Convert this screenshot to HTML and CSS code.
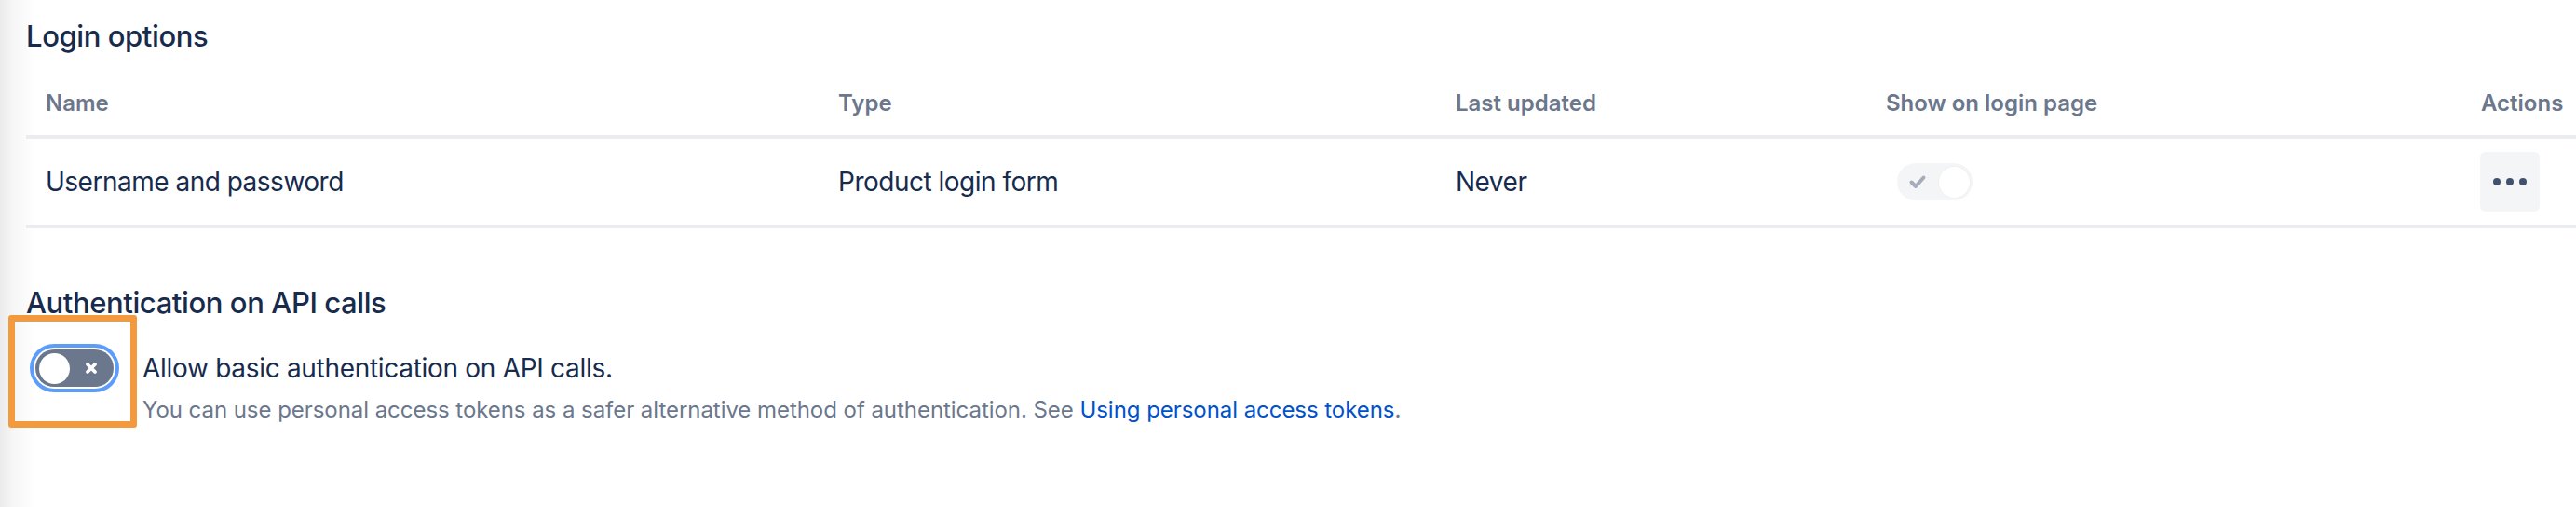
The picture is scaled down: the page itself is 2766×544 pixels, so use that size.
FILE: index.html
```html
<!DOCTYPE html>
<html lang="en">
<head>
<meta charset="utf-8">
<title>Login options</title>
<link rel="stylesheet" href="styles.css">
</head>
<body>
<main class="page">
  <h2 class="heading">Login options</h2>
  <div class="table">
    <div class="th">Name</div>
    <div class="th">Type</div>
    <div class="th">Last updated</div>
    <div class="th">Show on login page</div>
    <div class="th">Actions</div>

    <div class="td">Username and password</div>
    <div class="td">Product login form</div>
    <div class="td">Never</div>
    <div class="td">
      <span class="mini-toggle">
        <svg class="mini-check" viewBox="0 0 20 20" width="20" height="20"><path d="M3.5 10.5 L8 15 L16.5 5.5" fill="none" stroke="#A5ADBA" stroke-width="4" stroke-linecap="round" stroke-linejoin="round"/></svg>
        <span class="mini-knob"></span>
      </span>
    </div>
    <div class="td">
      <button class="more" type="button" aria-label="More actions">
        <span class="dot"></span><span class="dot"></span><span class="dot"></span>
      </button>
    </div>
  </div>

  <h2 class="heading heading-api">Authentication on API calls</h2>
  <div class="field">
    <div class="toggle-wrap">
      <span class="toggle">
        <span class="knob"></span>
        <svg class="x-icon" viewBox="0 0 16 16" width="16" height="16"><path d="M4 4 L12 12 M12 4 L4 12" fill="none" stroke="#fff" stroke-width="3.8" stroke-linecap="round"/></svg>
      </span>
      <span class="highlight"></span>
    </div>
    <div class="field-text">
      <div class="label">Allow basic authentication on API calls.</div>
      <div class="help">You can use personal access tokens as a safer alternative method of authentication. See <a href="#" class="link">Using personal access tokens</a>.</div>
    </div>
  </div>
</main>
</body>
</html>
```

FILE: styles.css
```css
html, body {
  margin: 0;
  padding: 0;
}
body {
  font-family: Inter, "Noto Sans", "Liberation Sans", sans-serif;
  color: #172B4D;
  width: 2766px;
  height: 544px;
  overflow: hidden;
  background: linear-gradient(to right, #ebebeb 0px, #f6f6f6 14px, #ffffff 38px) no-repeat;
  background-size: 40px 100%;
  background-color: #fff;
}
.page {
  padding: 19px 0 0 28px;
}
.heading {
  margin: 0;
  font-size: 31px;
  line-height: 40px;
  font-weight: 500;
  letter-spacing: -0.4px;
  color: #172B4D;
}
.table {
  display: grid;
  grid-template-columns: 851px 663px 462px 639px 1fr;
}
.th {
  font-size: 24px;
  line-height: 32px;
  font-weight: 600;
  color: #6B778C;
  padding: 36px 0 18px 21px;
  border-bottom: 4px solid #EBECF0;
  letter-spacing: 0;
}
.td {
  height: 92px;
  display: flex;
  align-items: center;
  padding-left: 21px;
  font-size: 28px;
  line-height: 32px;
  border-bottom: 4px solid #EBECF0;
  letter-spacing: -0.5px;
}
.mini-toggle {
  display: flex;
  align-items: center;
  justify-content: space-between;
  width: 81px;
  height: 40px;
  box-sizing: border-box;
  padding: 0 3px 0 12px;
  border-radius: 20px;
  background: #F4F5F7;
  margin-left: 12px;
}
.mini-check {
  display: block;
}
.mini-knob {
  width: 33px;
  height: 33px;
  border-radius: 50%;
  background: #fff;
  box-shadow: 0 0 0 1px #EFF0F3;
}
.more {
  width: 64px;
  height: 64px;
  border: none;
  border-radius: 6px;
  background: #F4F5F7;
  display: flex;
  align-items: center;
  justify-content: center;
  gap: 6px;
  padding: 0;
  margin-left: -1px;
  cursor: pointer;
}
.dot {
  width: 8px;
  height: 8px;
  border-radius: 50%;
  background: #42526E;
}
.heading-api {
  margin-top: 60px;
}
.field {
  display: flex;
  align-items: flex-start;
  margin-top: 30px;
}
.toggle-wrap {
  position: relative;
  margin-left: 10px;
  width: 84px;
  height: 40px;
}
.toggle {
  display: flex;
  align-items: center;
  justify-content: space-between;
  width: 84px;
  height: 40px;
  box-sizing: border-box;
  padding: 0 16px 0 4px;
  border-radius: 20px;
  background: #6B778C;
  box-shadow: 0 0 0 2px #fff, 0 0 0 6px #5C9DFA;
}
.knob {
  width: 33px;
  height: 33px;
  border-radius: 50%;
  background: #fff;
}
.x-icon {
  display: block;
}
.highlight {
  position: absolute;
  left: -29px;
  top: -37px;
  width: 138px;
  height: 121px;
  box-sizing: border-box;
  border: 7px solid #F29A3D;
  border-radius: 3px;
}
.field-text {
  margin-left: 31px;
  padding-top: 4px;
}
.label {
  font-size: 28px;
  line-height: 32px;
  letter-spacing: -0.3px;
  color: #172B4D;
}
.help {
  margin-top: 13px;
  font-size: 24px;
  line-height: 32px;
  color: #6B778C;
  letter-spacing: -0.05px;
}
.link {
  color: #0052CC;
  text-decoration: none;
}
```
